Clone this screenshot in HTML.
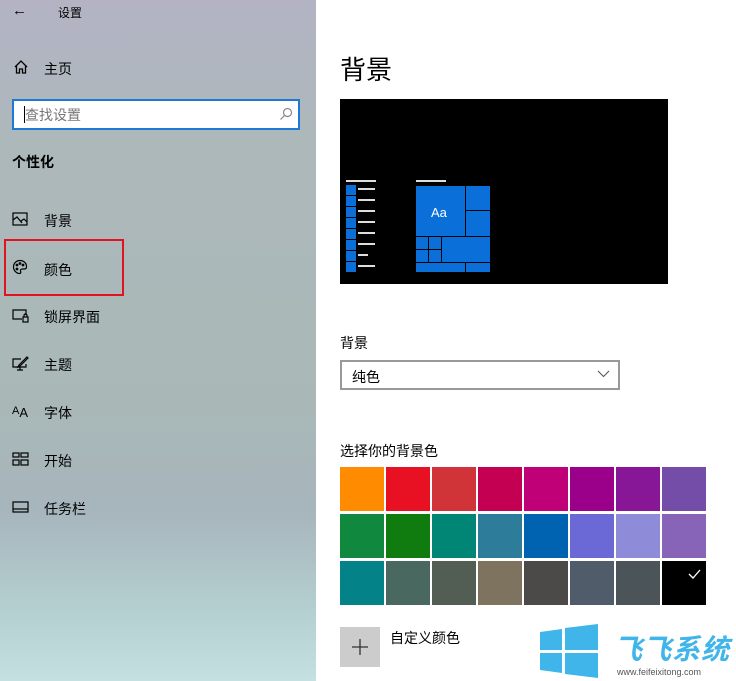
<!DOCTYPE html>
<html><head><meta charset="utf-8"><style>
*{margin:0;padding:0;box-sizing:border-box}
body{width:736px;height:681px;position:relative;overflow:hidden;background:#fff;font-family:"Liberation Sans","Noto Sans CJK SC",sans-serif;color:#000}
#left{position:absolute;left:0;top:0;width:316px;height:681px;background:linear-gradient(180deg,#b3b3c4 0%,#adb8bb 20%,#a9b8b7 60%,#a7b5bd 75%,#b5d0d0 90%,#c4e0e0 100%)}
.t{position:absolute;font-size:14px;white-space:nowrap}
.ic{position:absolute}
.a{position:absolute}
</style></head><body>
<div id="left">
 <div class="t" style="left:12px;top:2px;font-size:15px">←</div>
 <div class="t" style="left:58px;top:4px;font-size:12px">设置</div>
 <svg class="ic" style="left:13px;top:59px" width="16" height="16" viewBox="0 0 16 16" fill="none" stroke="#000" stroke-width="1.3"><path d="M2 8L8 2l6 6M3.5 7v7h3v-4h3v4h3V7"/></svg>
 <div class="t" style="left:44px;top:59px">主页</div>
 <div class="a" style="left:12px;top:99px;width:288px;height:31px;background:#fff;border:2px solid #1e78d4"></div>
 <div class="a" style="left:24px;top:106px;width:1px;height:17px;background:#000"></div>
 <div class="t" style="left:25px;top:105px;color:#777">查找设置</div>
 <svg class="ic" style="left:279px;top:107px" width="14" height="14" viewBox="0 0 14 14" fill="none" stroke="#888" stroke-width="1.2"><circle cx="8.5" cy="5.5" r="4"/><path d="M5.5 8.5L1.5 12.5"/></svg>
 <div class="t" style="left:12px;top:152px;font-weight:bold">个性化</div>
 <svg class="ic" style="left:12px;top:212px" width="16" height="14" viewBox="0 0 16 14" fill="none" stroke="#000" stroke-width="1.2"><rect x="1" y="1" width="14" height="12"/><path d="M1 8l4-3 5 6M9 9l3-2 3 3"/></svg>
 <div class="t" style="left:44px;top:211px">背景</div>
 <div class="a" style="left:4px;top:239px;width:120px;height:57px;border:2px solid #e0141e"></div>
 <svg class="ic" style="left:12px;top:259px" width="16" height="16" viewBox="0 0 16 16" fill="none" stroke="#000" stroke-width="1.2"><path d="M8 1.5C4 1.5 1.5 4.5 1.5 8c0 3.5 3 6.5 6 6.5 1.5 0 1.5-1.5 1-2.5s.5-2 2-2h2c1.5 0 2-1 2-2.5 0-3.5-3-6-6.5-6z"/><circle cx="5" cy="6" r=".8"/><circle cx="8" cy="4.5" r=".8"/><circle cx="11" cy="6" r=".8"/><circle cx="5" cy="10" r=".8"/></svg>
 <div class="t" style="left:44px;top:260px">颜色</div>
 <svg class="ic" style="left:12px;top:309px" width="18" height="14" viewBox="0 0 18 14" fill="none" stroke="#000" stroke-width="1.2"><path d="M10 10H1V1h13v5"/><rect x="11" y="8" width="5" height="5"/><path d="M12 8V6.5a1.5 1.5 0 0 1 3 0V8"/></svg>
 <div class="t" style="left:44px;top:307px">锁屏界面</div>
 <svg class="ic" style="left:12px;top:355px" width="17" height="16" viewBox="0 0 17 16" fill="none" stroke="#000" stroke-width="1.2"><path d="M9 4H1v8h13V9M5 15h6M8 12v3"/><path d="M7 10l8-8 1 1-8 8-2 1z"/></svg>
 <div class="t" style="left:44px;top:355px">主题</div>
 <div class="t" style="left:12px;top:402px;font-size:11px">A<span style="font-size:13px;position:relative;top:3px">A</span></div>
 <div class="t" style="left:44px;top:403px">字体</div>
 <svg class="ic" style="left:12px;top:452px" width="17" height="14" viewBox="0 0 17 14" fill="none" stroke="#000" stroke-width="1.2"><rect x="1" y="1" width="6" height="4"/><rect x="9" y="1" width="7" height="4"/><rect x="1" y="8" width="6" height="5"/><rect x="9" y="8" width="7" height="5"/></svg>
 <div class="t" style="left:44px;top:451px">开始</div>
 <svg class="ic" style="left:12px;top:501px" width="17" height="12" viewBox="0 0 17 12" fill="none" stroke="#000" stroke-width="1.2"><rect x="1" y="1" width="15" height="10"/><path d="M1 8h15"/></svg>
 <div class="t" style="left:44px;top:499px">任务栏</div>
</div>

<div class="t" style="left:340px;top:50px;font-size:26px">背景</div>
<div class="a" style="left:340px;top:99px;width:328px;height:185px;background:#000"></div>
<svg class="a" style="left:340px;top:99px" width="328" height="185">
 <g fill="#ddd"><rect x="6" y="81" width="30" height="2"/><rect x="76" y="81" width="30" height="2"/></g>
 <g fill="#0a6fd8">
  <rect x="6" y="86" width="10" height="10"/><rect x="6" y="97" width="10" height="10"/><rect x="6" y="108" width="10" height="10"/><rect x="6" y="119" width="10" height="10"/><rect x="6" y="130" width="10" height="10"/><rect x="6" y="141" width="10" height="10"/><rect x="6" y="152" width="10" height="10"/><rect x="6" y="163" width="10" height="10"/>
  <rect x="76" y="87" width="49" height="50"/><rect x="126" y="87" width="24" height="24"/><rect x="126" y="112" width="24" height="25"/>
  <rect x="76" y="138" width="12" height="12"/><rect x="89" y="138" width="12" height="12"/><rect x="76" y="151" width="12" height="12"/><rect x="89" y="151" width="12" height="12"/>
  <rect x="102" y="138" width="48" height="25"/><rect x="76" y="164" width="49" height="9"/><rect x="126" y="164" width="24" height="9"/>
 </g>
 <g fill="#ddd"><rect x="18" y="89" width="17" height="2"/><rect x="18" y="100" width="17" height="2"/><rect x="18" y="111" width="17" height="2"/><rect x="18" y="122" width="17" height="2"/><rect x="18" y="133" width="17" height="2"/><rect x="18" y="144" width="17" height="2"/><rect x="18" y="155" width="10" height="2"/><rect x="18" y="166" width="17" height="2"/></g>
 <text x="91" y="118" fill="#fff" font-size="13" font-family="Liberation Sans">Aa</text>
</svg>

<div class="t" style="left:340px;top:333px">背景</div>
<div class="a" style="left:340px;top:360px;width:280px;height:30px;border:2px solid #999"></div>
<div class="t" style="left:352px;top:367px">纯色</div>
<svg class="a" style="left:597px;top:370px" width="13" height="8" fill="none" stroke="#555" stroke-width="1.1"><path d="M1 1l5.5 5.5L12 1"/></svg>

<div class="t" style="left:340px;top:441px">选择你的背景色</div>
<div class="a" style="left:340px;top:467px;width:370px;display:grid;grid-template-columns:repeat(8,44px);grid-auto-rows:44px;column-gap:2px;row-gap:3px">
 <div style="background:#ff8c00"></div><div style="background:#e81123"></div><div style="background:#d13438"></div><div style="background:#c30052"></div><div style="background:#bf0077"></div><div style="background:#9a0089"></div><div style="background:#881798"></div><div style="background:#744da9"></div>
 <div style="background:#10893e"></div><div style="background:#107c10"></div><div style="background:#018574"></div><div style="background:#2d7d9a"></div><div style="background:#0063b1"></div><div style="background:#6b69d6"></div><div style="background:#8e8cd8"></div><div style="background:#8764b8"></div>
 <div style="background:#038387"></div><div style="background:#486860"></div><div style="background:#525e54"></div><div style="background:#7e735f"></div><div style="background:#4c4a48"></div><div style="background:#515c6b"></div><div style="background:#4a5459"></div><div style="background:#000;position:relative"><svg style="position:absolute;left:26px;top:8px" width="13" height="10" fill="none" stroke="#fff" stroke-width="1.3"><path d="M1 5l4 4 7-8"/></svg></div>
</div>
<div class="a" style="left:340px;top:627px;width:40px;height:40px;background:#ccc"></div>
<svg class="a" style="left:351px;top:638px" width="18" height="18" stroke="#333" stroke-width="1.3"><path d="M9 1v16M1 9h16"/></svg>
<div class="t" style="left:390px;top:628px">自定义颜色</div>

<svg class="a" style="left:538px;top:624px" width="64" height="54"><g fill="#3fb5ea"><polygon points="2,8 24,5 24,26 2,26"/><polygon points="27,4 60,0 60,26 27,26"/><polygon points="2,29 24,29 24,49 2,46"/><polygon points="27,29 60,29 60,54 27,50"/></g></svg>
<div class="t" style="left:614px;top:628px;font-size:28px;font-weight:bold;color:#3fb5ea;font-style:italic;letter-spacing:1px">飞飞系统</div>
<div class="t" style="left:617px;top:667px;font-size:9px;color:#555">www.feifeixitong.com</div>
</body></html>
